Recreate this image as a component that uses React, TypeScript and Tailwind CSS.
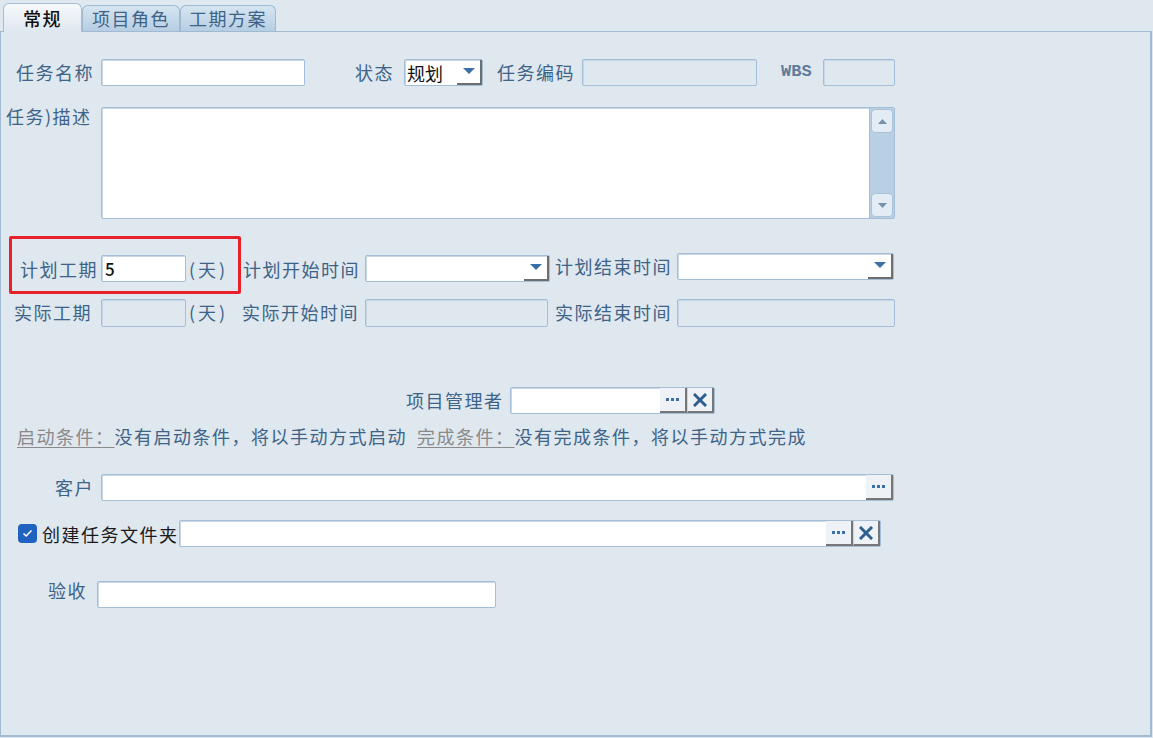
import React from 'react';

const labelCls = 'text-[18px] leading-[22px] tracking-[1.5px] text-[#3d6387] whitespace-nowrap';

function Box({ w, h = 27, white = true, className = '', children }: { w: number; h?: number; white?: boolean; className?: string; children?: React.ReactNode }) {
  return (
    <div
      className={`flex border border-[#a3bed6] rounded-[2px] shadow-[inset_1px_1px_0_#c8d8e6] ${white ? 'bg-white' : 'bg-[#dfe7ef]'} ${className}`}
      style={{ width: w, height: h }}
    >
      {children}
    </div>
  );
}

function Arrow() {
  return (
    <div className="ml-auto flex h-full w-[25px] items-center justify-center border-r-2 border-b-2 border-[#6e6e6e]">
      <svg width="12" height="7" viewBox="0 0 12 7">
        <path d="M0 0 H12 L6 6 Z" fill="#3a70a5" />
      </svg>
    </div>
  );
}

function DotsButton() {
  return (
    <div className="flex h-full w-[27px] items-center justify-center gap-[2px] bg-[#eef2f6] border-r-2 border-b-2 border-[#777]">
      <span className="h-[3px] w-[3px] bg-[#3a70a5]" />
      <span className="h-[3px] w-[3px] bg-[#3a70a5]" />
      <span className="h-[3px] w-[3px] bg-[#3a70a5]" />
    </div>
  );
}

function ClearButton() {
  return (
    <div className="flex h-full w-[27px] items-center justify-center bg-[#eef2f6] border-r-2 border-b-2 border-l border-[#777] border-l-[#c9d4de]">
      <svg width="14" height="14" viewBox="0 0 14 14">
        <path d="M2 2 L12 12 M12 2 L2 12" stroke="#2f5f8f" strokeWidth="3" strokeLinecap="square" />
      </svg>
    </div>
  );
}

function Scrollbar() {
  return (
    <div className="ml-auto flex h-full w-[25px] flex-col justify-between bg-[#b9cfe3] border-l border-[#a3bed6] p-[1px]">
      <div className="flex h-[24px] items-center justify-center rounded-[4px] border border-[#a9c2d8] bg-[#e3ecf4]">
        <svg width="9" height="5" viewBox="0 0 9 5"><path d="M0 5 L4.5 0 L9 5 Z" fill="#7592ad" /></svg>
      </div>
      <div className="flex h-[24px] items-center justify-center rounded-[4px] border border-[#a9c2d8] bg-[#e3ecf4]">
        <svg width="9" height="5" viewBox="0 0 9 5"><path d="M0 0 L4.5 5 L9 0 Z" fill="#7592ad" /></svg>
      </div>
    </div>
  );
}

export default function App() {
  return (
    <div className="w-[1153px] h-[738px] bg-[#dfe7ef] font-['Noto_Sans_CJK_SC','Noto_Sans',sans-serif] overflow-hidden">
      {/* tabs */}
      <div className="flex h-[31px] items-end pl-[3px]">
        <div className="relative z-10 -mb-px flex h-[29px] w-[79px] items-center justify-center rounded-t-[6px] border border-b-0 border-[#a3bed6] bg-gradient-to-b from-[#f6f9fb] to-[#dfe7ef] text-[18px] font-medium tracking-[1.5px] text-[#111]">
          常规
        </div>
        <div className="flex h-[26px] w-[98px] items-center justify-center rounded-t-[6px] border border-b-0 border-[#9dbad3] bg-gradient-to-b from-[#d6e5f1] to-[#b6cee3] text-[18px] tracking-[1.5px] text-[#3d6387]">
          项目角色
        </div>
        <div className="flex h-[26px] w-[96px] items-center justify-center rounded-t-[6px] border border-b-0 border-[#9dbad3] bg-gradient-to-b from-[#d6e5f1] to-[#b6cee3] text-[18px] tracking-[1.5px] text-[#3d6387]">
          工期方案
        </div>
      </div>

      {/* panel */}
      <div className="h-[706px] w-[1152px] border border-r-2 border-b-2 border-[#9fbad1]">
        {/* row 1 */}
        <div className="mt-[27px] flex h-[27px] items-center">
          <span className={`${labelCls} w-[100px] pr-[7px] text-right -mt-[2px]`}>任务名称</span>
          <Box w={204} />
          <span className={`${labelCls} ml-[50px] w-[49px] -mt-[2px]`}>状态</span>
          <Box w={79} className="items-center">
            <span className="pl-[2px] text-[18px] leading-none text-[#111]">规划</span>
            <Arrow />
          </Box>
          <span className={`${labelCls} ml-[14px] w-[85px] -mt-[2px]`}>任务编码</span>
          <Box w={175} white={false} />
          <span className="ml-[24px] w-[42px] font-['Liberation_Mono',monospace] text-[17px] font-bold text-[#5f7d9b] -mt-[2px]">WBS</span>
          <Box w={72} white={false} />
        </div>

        {/* row 2 description */}
        <div className="mt-[21px] flex items-start">
          <span className={`${labelCls} w-[100px] pl-[5px] -mt-[2px]`}>任务)描述</span>
          <Box w={794} h={112}>
            <Scrollbar />
          </Box>
        </div>

        {/* row 3 plan */}
        <div className="relative mt-[36px] flex h-[27px] items-center">
          <div className="pointer-events-none absolute left-[8px] -top-[19px] h-[58px] w-[232px] border-[3px] border-[#e8202a] rounded-[2px]" />
          <span className={`${labelCls} w-[100px] pr-[3px] text-right`}>计划工期</span>
          <Box w={85} className="items-center">
            <span className="pl-[3px] text-[17px] font-medium leading-none text-[#111]">5</span>
          </Box>
          <span className={`${labelCls} w-[57px] pl-[3px] tracking-[3px]`}>(天)</span>
          <span className={`${labelCls} w-[122px]`}>计划开始时间</span>
          <Box w={185} className="items-center">
            <Arrow />
          </Box>
          <span className={`${labelCls} w-[127px] pl-[5px] -mt-[5px]`}>计划结束时间</span>
          <Box w={217} className="items-center -mt-[5px]">
            <Arrow />
          </Box>
        </div>

        {/* row 4 actual */}
        <div className="mt-[17px] flex h-[28px] items-center">
          <span className={`${labelCls} w-[100px] pr-[9px] text-right -mt-[2px]`}>实际工期</span>
          <Box w={85} h={28} white={false} />
          <span className={`${labelCls} w-[56px] pl-[3px] tracking-[3px] -mt-[2px]`}>(天)</span>
          <span className={`${labelCls} w-[123px] -mt-[2px]`}>实际开始时间</span>
          <Box w={183} h={28} white={false} />
          <span className={`${labelCls} w-[129px] pl-[7px] -mt-[2px]`}>实际结束时间</span>
          <Box w={218} h={28} white={false} />
        </div>

        {/* row 5 manager */}
        <div className="mt-[60px] flex h-[27px] items-center">
          <span className={`${labelCls} ml-[405px] w-[104px] -mt-[2px]`}>项目管理者</span>
          <Box w={205}>
            <div className="ml-auto flex">
              <DotsButton />
              <ClearButton />
            </div>
          </Box>
        </div>

        {/* row 6 conditions */}
        <div className={`${labelCls} mt-[11px] flex pl-[16px]`}>
          <span className="text-[#8a8a8a] underline underline-offset-[3px]">启动条件：</span>
          <span>没有启动条件，将以手动方式启动</span>
          <span className="ml-[10px] text-[#8a8a8a] underline underline-offset-[3px]">完成条件：</span>
          <span>没有完成条件，将以手动方式完成</span>
        </div>

        {/* row 7 customer */}
        <div className="mt-[27px] flex h-[27px] items-center">
          <span className={`${labelCls} w-[100px] pr-[7px] text-right -mt-[2px]`}>客户</span>
          <Box w={793}>
            <div className="ml-auto flex">
              <DotsButton />
            </div>
          </Box>
        </div>

        {/* row 8 folder */}
        <div className="mt-[19px] flex h-[27px] items-center">
          <div className="ml-[17px] flex h-[19px] w-[19px] items-center justify-center rounded-[4px] bg-[#1f62bf]">
            <svg width="11" height="9" viewBox="0 0 11 9">
              <path d="M1.5 4.5 L4.2 7 L9.5 1.5" stroke="#fff" strokeWidth="1.6" fill="none" />
            </svg>
          </div>
          <span className="ml-[5px] text-[18px] leading-[22px] tracking-[1.5px] text-[#1a1a1a] whitespace-nowrap">创建任务文件夹</span>
          <Box w={702}>
            <div className="ml-auto flex">
              <DotsButton />
              <ClearButton />
            </div>
          </Box>
        </div>

        {/* row 9 acceptance */}
        <div className="mt-[34px] flex h-[27px] items-center">
          <span className={`${labelCls} w-[96px] pr-[10px] text-right -mt-[9px]`}>验收</span>
          <Box w={399} />
        </div>
      </div>
    </div>
  );
}
